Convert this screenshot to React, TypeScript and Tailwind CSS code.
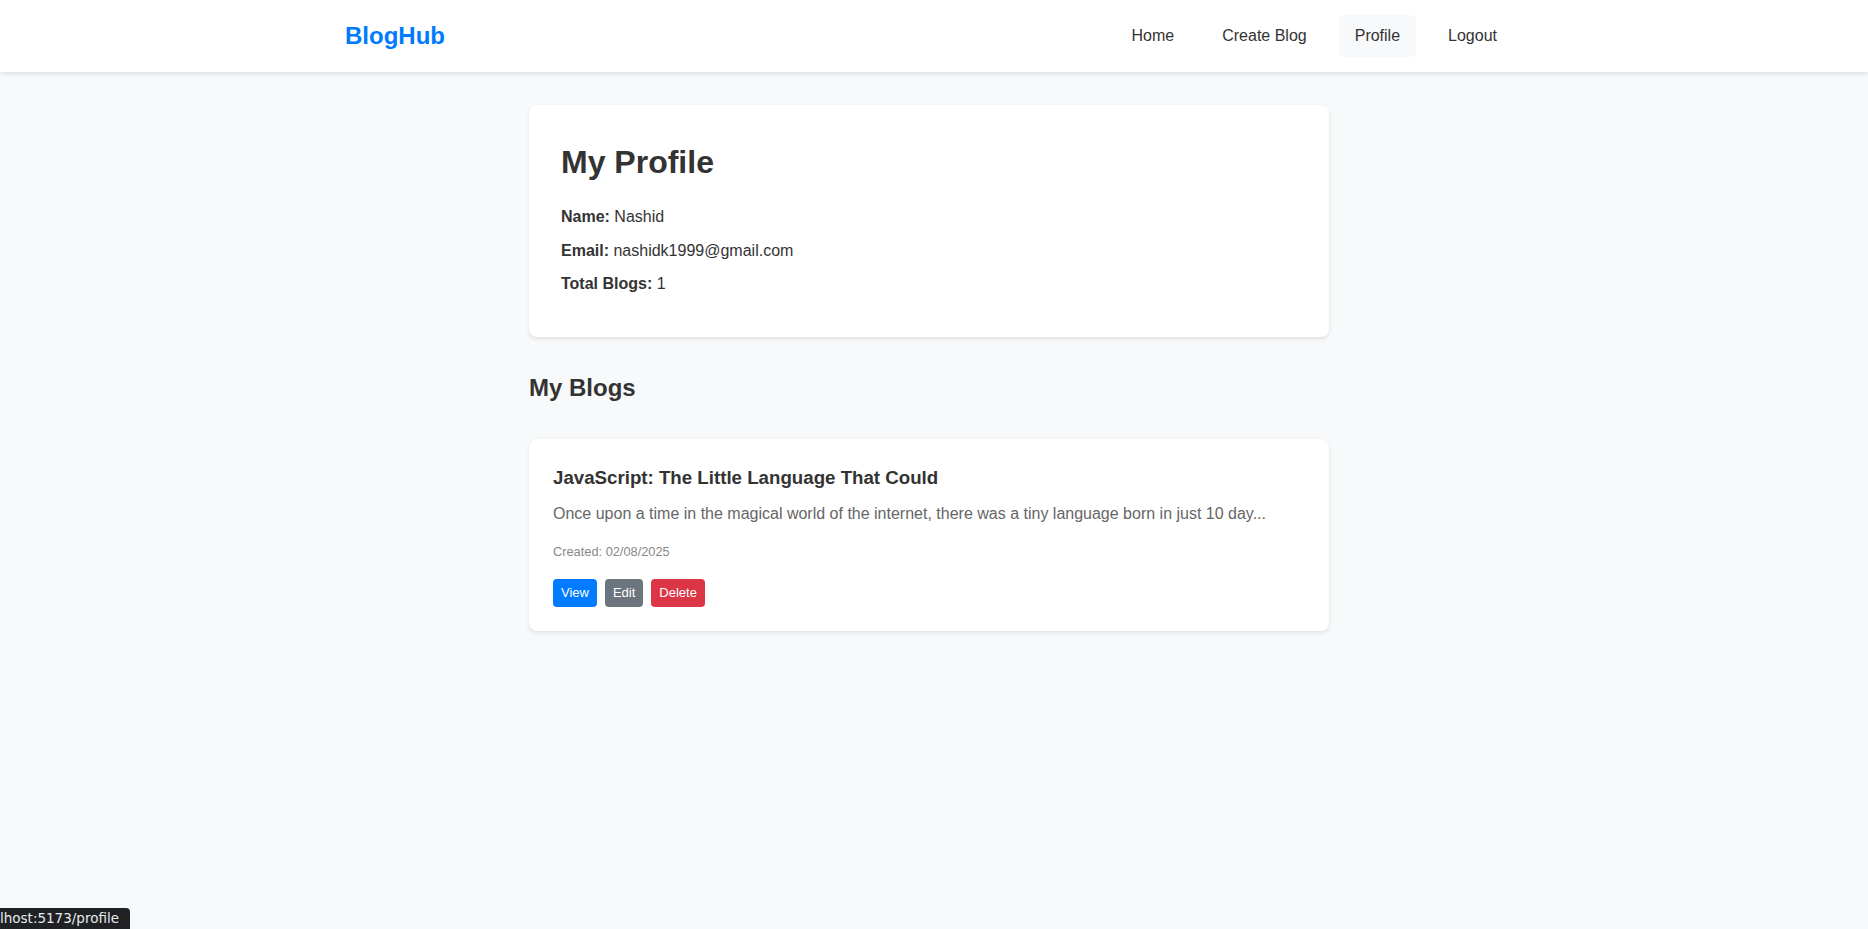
import React from "react";

const font = { fontFamily: '"Liberation Sans", Arial, sans-serif' };

export default function App() {
  return (
    <div
      className="min-h-screen bg-[#f8f9fa] text-[#333] leading-[1.6]"
      style={font}
    >
      <nav className="bg-white shadow-[0_2px_4px_rgba(0,0,0,0.1)] pr-[10px]">
        <div className="max-w-[1200px] mx-auto px-4 py-[15px] flex items-center justify-between">
          <a className="text-[24px] font-bold text-[#007bff] leading-[42px]">BlogHub</a>
          <div className="flex gap-4 items-center">
            <a className="px-4 h-[42px] flex items-center rounded-[5px] text-[16px] text-[#333]">Home</a>
            <a className="px-4 h-[42px] flex items-center rounded-[5px] text-[16px] text-[#333]">Create Blog</a>
            <a className="px-4 h-[42px] flex items-center rounded-[5px] text-[16px] text-[#333] bg-[#f8f9fa]">Profile</a>
            <a className="px-4 h-[42px] flex items-center rounded-[5px] text-[16px] text-[#333]">Logout</a>
          </div>
        </div>
      </nav>

      <main className="pr-[10px] pt-[33px]">
        <div className="w-[800px] mx-auto">
          <section className="bg-white rounded-lg shadow-[0_2px_4px_rgba(0,0,0,0.1)] p-8 mb-8">
            <h1 className="text-[32px] font-bold mb-4 leading-[1.6]">My Profile</h1>
            <p className="my-2 text-[16px]">
              <strong>Name:</strong> Nashid
            </p>
            <p className="my-2 text-[16px]">
              <strong>Email:</strong> nashidk1999@gmail.com
            </p>
            <p className="my-2 text-[16px]">
              <strong>Total Blogs:</strong> 1
            </p>
          </section>

          <h2 className="text-[24px] font-bold mb-8">My Blogs</h2>

          <article className="bg-white rounded-lg shadow-[0_2px_4px_rgba(0,0,0,0.1)] p-6">
            <h3 className="text-[18.7px] font-bold leading-[30px] mb-[8px]">
              JavaScript: The Little Language That Could
            </h3>
            <p className="text-[16px] text-[#666] mb-[15px]">
              Once upon a time in the magical world of the internet, there was a tiny language born in just 10 day...
            </p>
            <p className="text-[12.8px] text-[#888] leading-[20px]">Created: 02/08/2025</p>
            <div className="flex gap-2 mt-[17px]">
              <button className="h-[28px] px-2 rounded text-[13px] text-white bg-[#007bff]">View</button>
              <button className="h-[28px] px-2 rounded text-[13px] text-white bg-[#6c757d]">Edit</button>
              <button className="h-[28px] px-2 rounded text-[13px] text-white bg-[#dc3545]">Delete</button>
            </div>
          </article>
        </div>
      </main>

      <div
        className="fixed left-0 bottom-0 h-[21px] w-[130px] overflow-hidden bg-[#202124] rounded-tr-[4px] flex items-center"
        style={{ fontFamily: '"DejaVu Sans", sans-serif' }}
      >
        <span className="text-[13.5px] text-[#e8eaed] whitespace-nowrap leading-none">lhost:5173/profile</span>
      </div>
    </div>
  );
}
